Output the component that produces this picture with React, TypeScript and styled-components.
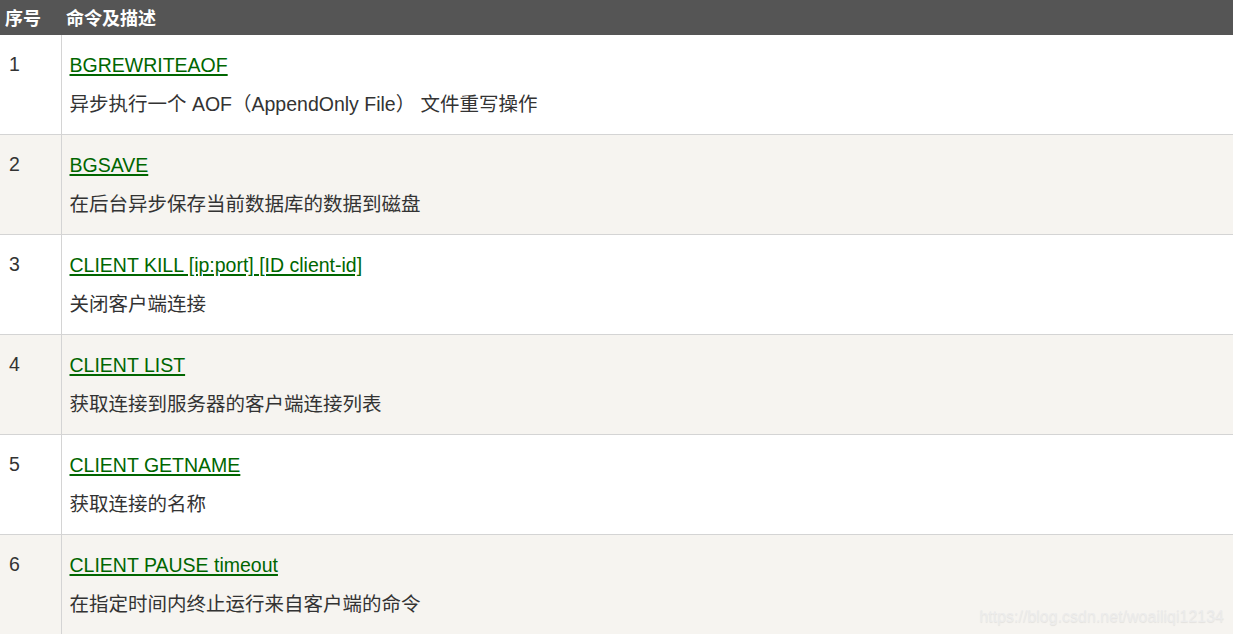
import React from "react";
import styled, { createGlobalStyle } from "styled-components";

const Global = createGlobalStyle`
  html, body { margin: 0; padding: 0; background: #fff; overflow: hidden; }
  body { font-family: "Liberation Sans", Arial, "Noto Sans CJK SC", sans-serif; }
`;

const Page = styled.div`
  position: relative;
  width: 1233px;
  height: 634px;
  overflow: hidden;
`;

const Table = styled.table`
  width: 1233px;
  border-collapse: collapse;
  border-spacing: 0;
  table-layout: fixed;
  color: #333;
`;

const HeadRow = styled.tr`
  background: #555555;
  height: 35px;
`;

const Th = styled.th<{ $w?: number }>`
  ${(p) => (p.$w ? `width: ${p.$w}px;` : "")}
  padding: 0 5px;
  text-align: left;
  color: #fff;
  font-size: 18px;
  font-weight: bold;
  font-family: "Noto Sans CJK SC", sans-serif;
  line-height: 35px;
  height: 35px;
  box-sizing: border-box;
`;

const Row = styled.tr<{ $alt: boolean }>`
  background: ${(p) => (p.$alt ? "#f6f4f0" : "#ffffff")};
  border-bottom: 1px solid #d4d4d4;
`;

const NumCell = styled.td`
  vertical-align: top;
  padding: 10px 8px 11px 9px;
  font-size: 19.5px;
  line-height: 39px;
  border-right: 1px solid #d4d4d4;
`;

const Cell = styled.td`
  vertical-align: top;
  padding: 11px 8px 10px 8px;
  font-size: 19.5px;
  line-height: 39px;
`;

const Cmd = styled.a`
  display: block;
  color: #006600;
  text-decoration: underline;
  text-underline-offset: 2px;
  text-decoration-thickness: 1.5px;
  width: max-content;
`;

const Desc = styled.div`
  color: #333;
  white-space: pre;
`;

const Watermark = styled.div`
  position: absolute;
  right: 9px;
  bottom: 8px;
  font-size: 16px;
  color: #ececec;
  text-shadow: 0 1px 1px rgba(0, 0, 0, 0.08);
  font-family: "Liberation Sans", Arial, sans-serif;
`;

const rows = [
  { n: 1, cmd: "BGREWRITEAOF", desc: "异步执行一个 AOF（AppendOnly File） 文件重写操作" },
  { n: 2, cmd: "BGSAVE", desc: "在后台异步保存当前数据库的数据到磁盘" },
  { n: 3, cmd: "CLIENT KILL [ip:port] [ID client-id]", desc: "关闭客户端连接" },
  { n: 4, cmd: "CLIENT LIST", desc: "获取连接到服务器的客户端连接列表" },
  { n: 5, cmd: "CLIENT GETNAME", desc: "获取连接的名称" },
  { n: 6, cmd: "CLIENT PAUSE timeout", desc: "在指定时间内终止运行来自客户端的命令" },
];

export default function App() {
  return (
    <Page>
      <Global />
      <Table>
        <thead>
          <HeadRow>
            <Th $w={61}>序号</Th>
            <Th>命令及描述</Th>
          </HeadRow>
        </thead>
        <tbody>
          {rows.map((r, i) => (
            <Row key={r.n} $alt={i % 2 === 1}>
              <NumCell>{r.n}</NumCell>
              <Cell>
                <Cmd href="#">{r.cmd}</Cmd>
                <Desc>{r.desc}</Desc>
              </Cell>
            </Row>
          ))}
        </tbody>
      </Table>
      <Watermark>https://blog.csdn.net/woailiqi12134</Watermark>
    </Page>
  );
}
